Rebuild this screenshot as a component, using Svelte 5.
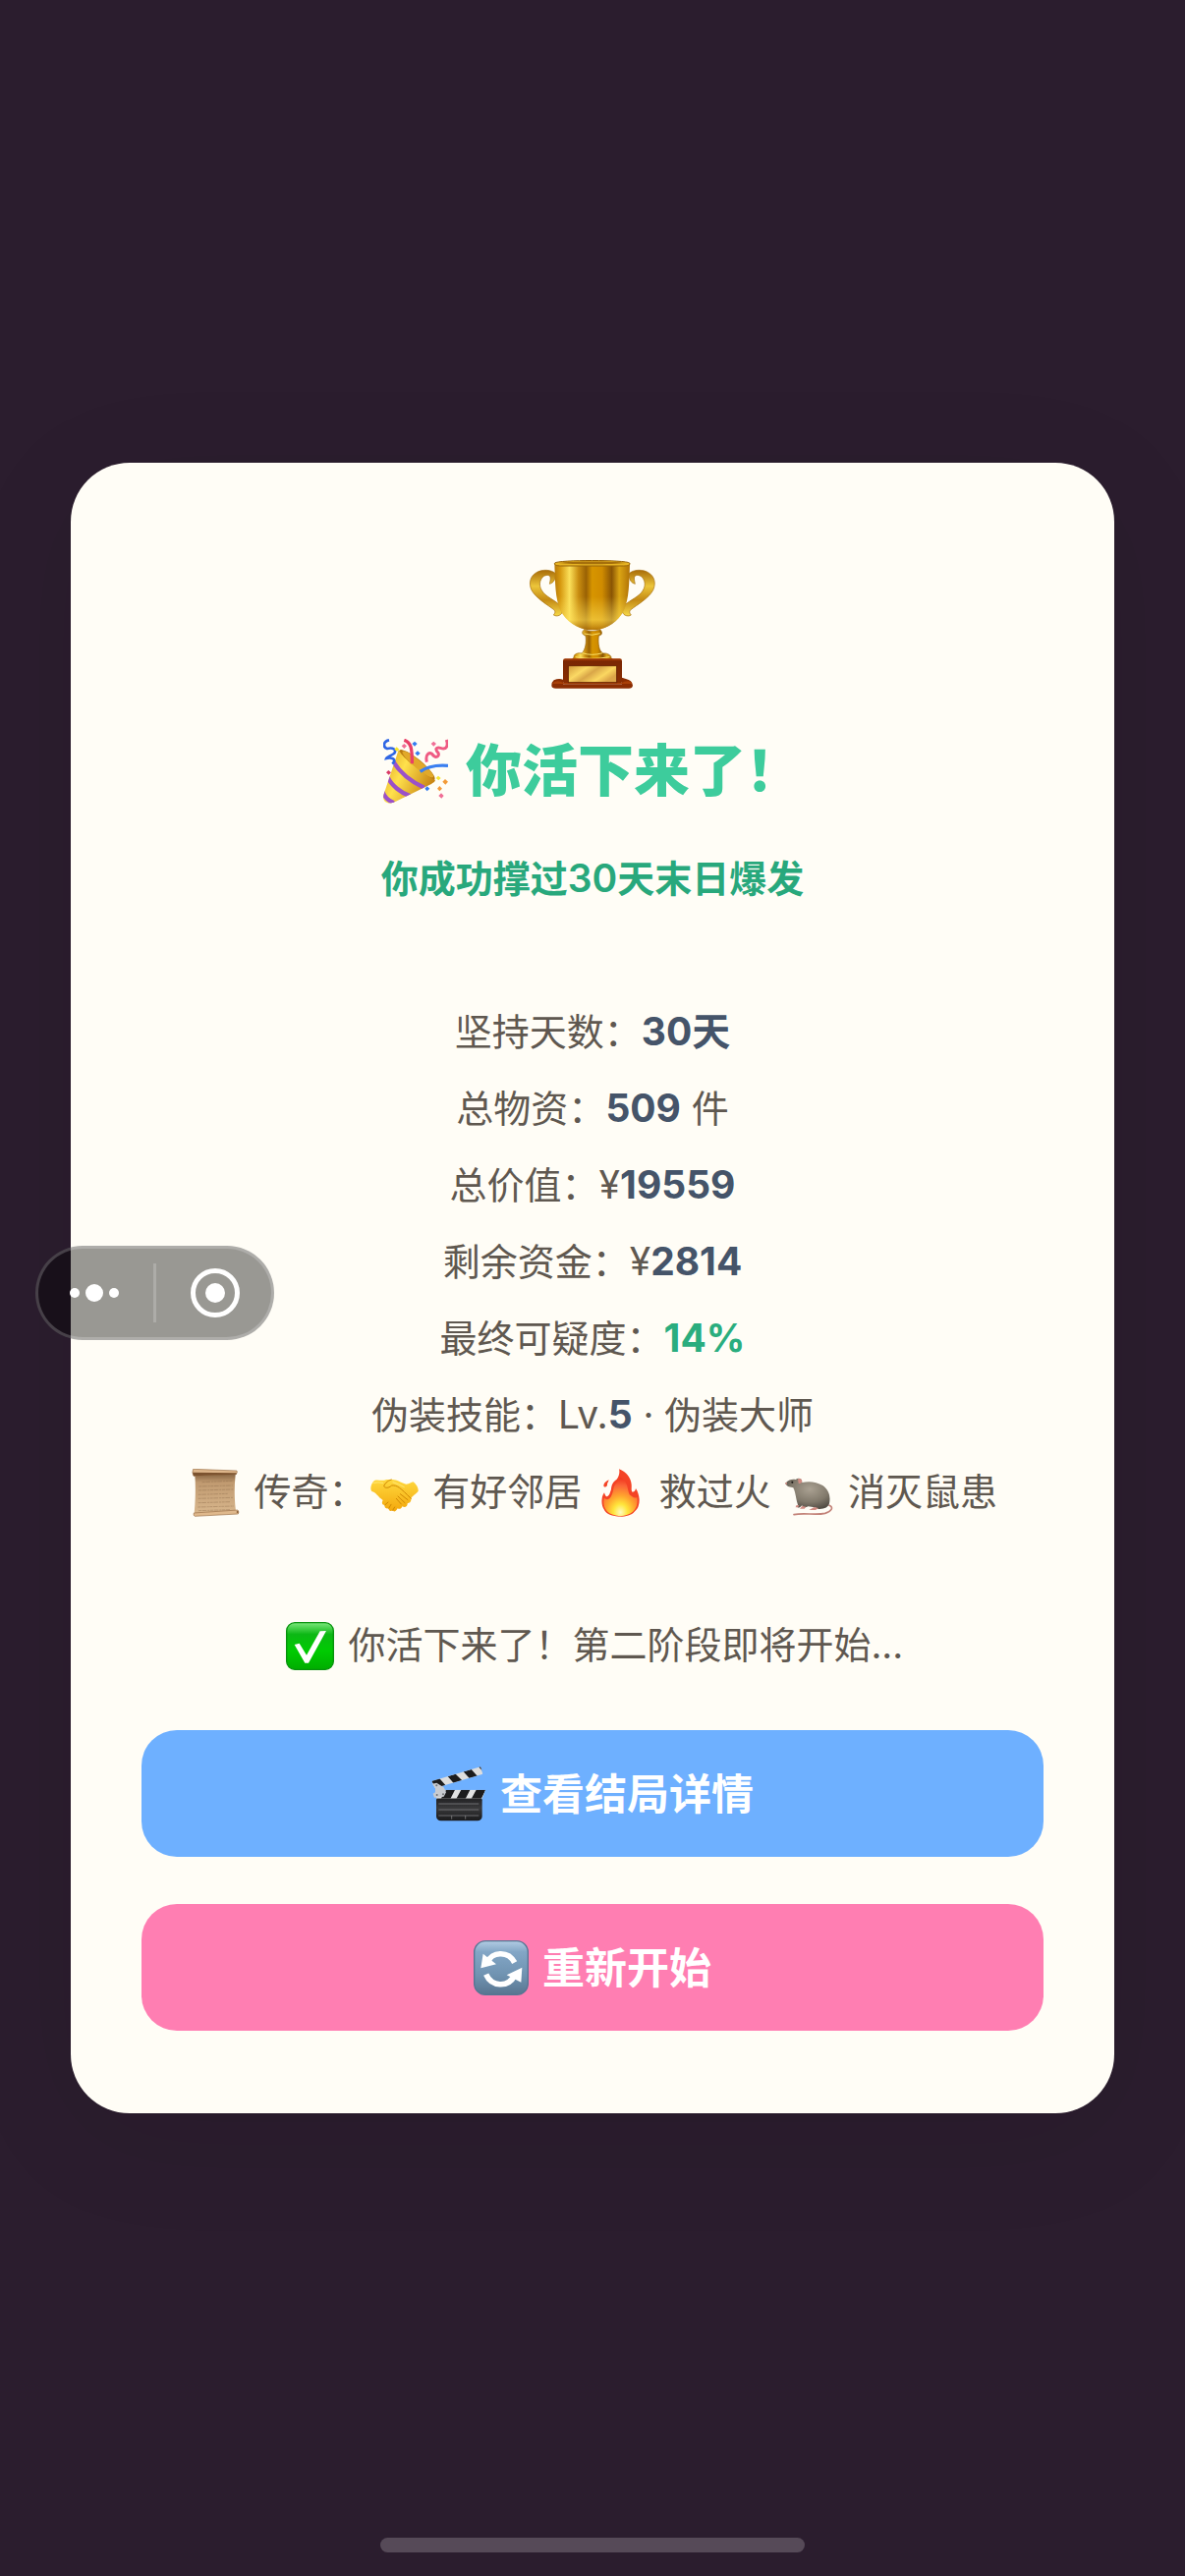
<script>
  const stats = [
    { label: '坚持天数：', value: '30天' },
    { label: '总物资：', value: '509', after: ' 件' },
    { label: '总价值：', prefix: '¥', value: '19559' },
    { label: '剩余资金：', prefix: '¥', value: '2814' },
    { label: '最终可疑度：', value: '14%', good: true },
    { label: '伪装技能：', prefix: 'Lv.', value: '5', after: ' · 伪装大师' }
  ];
</script>

<div class="page">
  <main class="card">
    <svg class="trophy" viewBox="108 87 396 396" aria-hidden="true">
      <defs>
        <linearGradient id="cup" x1="0" x2="1">
          <stop offset="0" stop-color="#b87a08" />
          <stop offset=".08" stop-color="#d79a10" />
          <stop offset=".2" stop-color="#fbe05a" />
          <stop offset=".32" stop-color="#c98d10" />
          <stop offset=".42" stop-color="#9a6204" />
          <stop offset=".5" stop-color="#d79500" />
          <stop offset=".63" stop-color="#d08c00" />
          <stop offset=".76" stop-color="#8a5504" />
          <stop offset=".86" stop-color="#dba514" />
          <stop offset="1" stop-color="#b07206" />
        </linearGradient>
        <linearGradient id="cupGlow" x1="0" x2="0" y1="0" y2="1">
          <stop offset=".5" stop-color="#ffe860" stop-opacity="0" />
          <stop offset=".85" stop-color="#ffe15a" stop-opacity=".55" />
          <stop offset="1" stop-color="#a86a08" stop-opacity=".7" />
        </linearGradient>
        <linearGradient id="handle" x1="0" x2="0" y1="0" y2="1">
          <stop offset="0" stop-color="#a86c08" />
          <stop offset=".35" stop-color="#ecc53a" />
          <stop offset=".65" stop-color="#c48a14" />
          <stop offset="1" stop-color="#f6d848" />
        </linearGradient>
        <linearGradient id="wood" x1="0" x2="0" y1="0" y2="1">
          <stop offset="0" stop-color="#a63c06" />
          <stop offset=".12" stop-color="#7a2703" />
          <stop offset="1" stop-color="#8a2d02" />
        </linearGradient>
        <linearGradient id="plate" x1="0" x2="1" y1="0" y2=".5">
          <stop offset="0" stop-color="#d39a3c" />
          <stop offset=".35" stop-color="#fbd964" />
          <stop offset=".55" stop-color="#d9a648" />
          <stop offset=".8" stop-color="#fbd760" />
          <stop offset="1" stop-color="#dca548" />
        </linearGradient>
      </defs>
      <path fill="url(#handle)" stroke="#a56c0c" stroke-width="2" d="M194 132C180 118 152 118 135 128C116 139 110 160 120 182C133 207 172 229 187 241C194 247 192 252 187 258C198 265 215 258 214 244C213 226 190 216 170 202C148 187 139 166 150 147C158 134 174 134 177 141C179 150 176 156 175 163C186 160 193 152 194 132Z" />
      <path fill="url(#handle)" stroke="#a56c0c" stroke-width="2" d="M417 132C431 118 459 118 476 128C495 139 501 160 491 182C478 207 439 229 424 241C417 247 419 252 424 258C413 265 396 258 397 244C398 226 421 216 441 202C463 187 472 166 461 147C453 134 437 134 434 141C432 150 435 156 436 163C425 160 418 152 417 132Z" />
      <path fill="url(#cup)" d="M190 100C192 160 192 208 208 243C225 278 262 300 291 303H320C350 300 385 278 402 243C418 208 418 160 420 100Z" />
      <path fill="url(#cupGlow)" d="M190 100C192 160 192 208 208 243C225 278 262 300 291 303H320C350 300 385 278 402 243C418 208 418 160 420 100Z" />
      <path fill="#e7b423" stroke="#97640a" stroke-width="3" d="M191 99C202 89 408 89 419 99C424 107 407 108 401 108H209C202 108 186 106 191 99Z" />
      <path fill="#a56f0b" d="M202 99C245 93 365 93 408 99C365 104 245 104 202 99Z" />
      <path fill="url(#cup)" stroke="#97640a" stroke-width="2" d="M281 302C295 308 316 308 329 302C337 310 337 319 325 321C322 345 326 370 339 375C352 373 365 383 363 389C368 392 367 397 360 399H249C243 396 245 390 249 388C248 376 262 373 273 375C285 364 288 340 285 321C273 318 272 309 281 302Z" />
      <path fill="none" stroke="#fbdf66" stroke-width="3" d="M281 315Q304 323 329 314M254 386Q304 396 358 386M275 374Q304 384 337 374" />
      <rect x="216" y="391" width="180" height="78" rx="7" fill="url(#wood)" />
      <path fill="#8b2d02" d="M216 455Q203 450 188 457Q180 464 181 474Q182 482 194 482H417Q428 482 429 473Q427 457 408 453L396 449V469H216Z" />
      <path fill="#a94008" d="M184 465Q200 455 217 465H395Q412 455 426 464V468H184Z" />
      <rect x="232" y="413" width="148" height="51" fill="url(#plate)" stroke="#6b2503" stroke-width="3" />
    </svg>

    <h1>
      <svg class="title-icon" viewBox="63 60 198 198" aria-hidden="true">
        <defs>
          <linearGradient id="cone" x1="0" x2="1" y1="0" y2=".5">
            <stop offset="0" stop-color="#d99a1c" />
            <stop offset=".45" stop-color="#ffe14c" />
            <stop offset="1" stop-color="#c98614" />
          </linearGradient>
          <clipPath id="coneClip"><path d="M110 94C118 112 165 155 221 186C224 190 216 194 210 198L100 252C80 262 60 255 64 232Z" /></clipPath>
        </defs>
        <ellipse cx="166" cy="140" rx="70" ry="17" transform="rotate(40 166 140)" fill="#b97a10" />
        <ellipse cx="169" cy="138" rx="61" ry="12" transform="rotate(40 169 138)" fill="#e1a92a" />
        <path fill="url(#cone)" d="M110 94C118 112 165 155 221 186C224 190 216 194 210 198L100 252C80 262 60 255 64 232Z" />
        <g clip-path="url(#coneClip)" fill="none" stroke="#9b51c9" stroke-width="13">
          <path d="M92 128C112 160 145 190 188 209" />
          <path d="M76 176C88 202 116 225 146 235" />
          <path d="M60 219C66 237 77 249 96 256" />
        </g>
        <path fill="none" stroke="#e94068" stroke-width="10" d="M127 64C146 70 152 84 151 136" />
        <path fill="none" stroke="#3b7ff0" stroke-width="10" d="M176 160C197 145 225 139 261 142" />
        <path fill="none" stroke="#2f66e4" stroke-width="8" d="M81 64C61 68 63 87 75 90C93 85 106 94 96 105C84 113 73 116 72 120C89 116 106 122 91 137" />
        <path fill="none" stroke="#ef5b83" stroke-width="9" d="M196 131C191 108 202 100 212 106C224 123 236 113 231 103C219 91 226 84 238 88C257 95 262 80 256 63" />
        <path fill="#f06f96" d="m127 75 8 7-8 8-8-8zM217 68l8 7-8 8-8-8zM240 226l8 8-7 8-9-8z" />
        <path fill="#357df1" d="m159 68 8 7-8 8-8-8zM168 97l8 7-8 8-8-8zM197 205l8 7-8 8-7-8z" />
        <path fill="#f5e632" d="m104 85 8 7-7 7-8-7zM231 173l8 7-7 7-8-7z" />
        <path fill="#f39b38" d="m252 183 9 8-8 9-9-9zM235 204l8 8-8 8-7-8z" />
        <path fill="#d93a66" d="m79 156 8 7-7 7-8-7z" />
      </svg>
      <span>你活下来了！</span>
    </h1>

    <p class="subtitle">你成功撑过<span class="num">30</span>天末日爆发</p>

    <ul class="stats">
      {#each stats as row}
        <li>{row.label}{#if row.prefix}<span class="num">{row.prefix}</span>{/if}<strong class:good={row.good}>{row.value}</strong>{row.after ?? ''}</li>
      {/each}
      <li>
        <svg class="emoji" viewBox="56 66 147 147" aria-hidden="true">
          <defs>
            <linearGradient id="paper" x1="0" x2="0" y1="0" y2="1">
              <stop offset="0" stop-color="#8c6946" />
              <stop offset=".2" stop-color="#c09a70" />
              <stop offset="1" stop-color="#d8b68c" />
            </linearGradient>
          </defs>
          <path fill="url(#paper)" d="M66 84H190Q184 140 191 196L64 202Q70 140 66 84Z" />
          <path fill="none" stroke="#8a6a49" stroke-opacity=".6" stroke-width="2" stroke-dasharray="9 2 14 3 6 2" d="M88 107l92-4M78 120l103-3M77 132l106-3M76 145l90-3M76 157l107-3M76 170l98-3M75 183l110-3M77 194l96-3" />
          <path fill="#deb68b" stroke="#9c7148" stroke-width="2" d="M61 67L194 72Q197 77 192 82L62 88Q56 76 61 67Z" />
          <path fill="#7c532f" d="M59 77L193 79V83L62 88Z" />
          <path fill="#dfb88c" stroke="#9c7148" stroke-width="2" d="M63 201L197 192Q202 198 198 204L66 211Q60 209 63 201Z" />
          <circle cx="196" cy="198" r="3" fill="#8a5f38" />
        </svg> 传奇：<svg class="emoji" viewBox="594 66 147 147" aria-hidden="true">
          <defs>
            <linearGradient id="hand" x1="0" x2="0" y1="0" y2="1">
              <stop offset="0" stop-color="#ffd83e" />
              <stop offset="1" stop-color="#f3a80c" />
            </linearGradient>
          </defs>
          <path fill="url(#hand)" d="M606 102C616 99 627 103 636 101C646 98 652 100 658 99C674 97 684 107 703 113C713 113 719 107 724 106C734 112 741 126 740 134C732 145 721 148 718 157C719 168 713 171 707 172C708 182 699 185 691 181C688 189 682 190 677 187C673 197 664 199 662 193C655 198 649 194 650 187C640 189 636 183 638 177C628 176 628 168 632 162C619 154 613 139 598 135C591 126 597 110 606 102Z" />
          <path fill="none" stroke="#cf8804" stroke-width="3" stroke-linecap="round" d="M658 99C644 103 637 113 635 120C642 128 654 122 659 117C676 116 684 123 718 157M685 143l23 18M678 150l21 20M673 157l15 17M650 187l7-12M638 177l10-9M662 193l6-10" />
          <path fill="none" stroke="#ffe775" stroke-width="3" stroke-linecap="round" d="M603 109Q617 106 632 109M663 107Q681 113 697 122" />
        </svg> 有好邻居 <svg class="emoji" viewBox="50 66 147 147" aria-hidden="true">
          <defs>
            <radialGradient id="fire" cx=".5" cy=".9" r=".85">
              <stop offset="0" stop-color="#fffbc0" />
              <stop offset=".25" stop-color="#ffe53b" />
              <stop offset=".5" stop-color="#ffa52e" />
              <stop offset=".8" stop-color="#fb6638" />
              <stop offset="1" stop-color="#f23b22" />
            </radialGradient>
          </defs>
          <path fill="#f44325" d="M119 67C142 76 156 95 157 114C158 126 155 132 160 137C167 137 169 131 170 126C181 142 183 164 179 176C178 186 170 193 166 197C158 207 140 212 122 212C99 211 79 205 73 190C64 177 64 152 74 139C77 149 80 152 84 150C91 146 91 139 95 129C96 114 101 105 112 98C119 90 122 77 119 67ZM88 100C86 108 82 110 83 117C77 125 71 122 72 116C74 107 80 105 88 100Z" />
          <path fill="url(#fire)" d="M122 91C120 105 105 110 102 127C99 145 93 159 83 160C78 160 75 154 73 157C68 183 79 207 122 211C160 209 180 187 174 153C166 158 157 150 151 145C143 126 148 106 122 91Z" />
        </svg> 救过火 <svg class="emoji" viewBox="618 66 147 147" aria-hidden="true">
          <defs>
            <radialGradient id="fur" cx=".55" cy=".35" r=".7">
              <stop offset="0" stop-color="#aaa192" />
              <stop offset=".6" stop-color="#81796b" />
              <stop offset="1" stop-color="#4d473f" />
            </radialGradient>
          </defs>
          <path fill="none" stroke="#c38278" stroke-width="5" stroke-linecap="round" d="M753 178C768 184 759 196 740 202C709 209 676 199 645 206" />
          <path fill="url(#fur)" d="M619 110C630 97 643 98 650 99C660 92 670 96 670 108C689 103 714 105 733 117C750 129 758 148 753 172C751 183 737 190 720 189L709 184L688 181C680 187 669 183 670 177C661 188 652 187 657 176C650 155 650 137 643 124C635 121 623 122 619 110Z" />
          <path fill="#d08b82" d="M657 97Q669 93 670 105Q666 114 659 110ZM619 108h5v5h-5zM652 178l9-1-3 7h-8zM670 180l12 2-5 6h-14zM707 183l13 3-9 6h-20z" />
          <circle cx="640" cy="107" r="3" fill="#171412" />
        </svg> 消灭鼠患
      </li>
    </ul>

    <p class="notice">
      <svg class="emoji" viewBox="0 0 147 147" aria-hidden="true">
        <defs>
          <linearGradient id="tick" x1="0" x2="0" y1="0" y2="1">
            <stop offset="0" stop-color="#7be77b" />
            <stop offset=".25" stop-color="#0cb814" />
            <stop offset=".6" stop-color="#00cb02" />
            <stop offset="1" stop-color="#00ad00" />
          </linearGradient>
        </defs>
        <rect x="2" y="2" width="143" height="143" rx="25" fill="url(#tick)" stroke="#07920d" stroke-width="4" />
        <path fill="#fff" d="M26 69L41 65L63 101L104 28L123 27L69 125H58Z" />
      </svg> 你活下来了！第二阶段即将开始...
    </p>

    <div class="actions">
      <button class="action details" type="button">
        <svg viewBox="59 56 168 168" aria-hidden="true">
          <defs>
            <linearGradient id="slate" x1="0" x2="0" y1="0" y2="1">
              <stop offset="0" stop-color="#1c1c1e" />
              <stop offset=".5" stop-color="#39393b" />
              <stop offset="1" stop-color="#19191b" />
            </linearGradient>
            <clipPath id="armTop"><path d="M60 101L209 57L216 79L70 122Z" /></clipPath>
            <clipPath id="armLow"><path d="M74 127H224L214 154H74Z" /></clipPath>
          </defs>
          <rect x="74" y="145" width="140" height="77" rx="14" fill="url(#slate)" />
          <g clip-path="url(#armTop)">
            <path fill="#dedede" d="M55 50H220V130H55Z" />
            <path fill="#1c1c1d" d="M58 100L84 93L104 115L76 124ZM109 86L133 79L153 99L127 107ZM157 72L181 65L200 86L175 92ZM203 57L224 52V80Z" />
          </g>
          <g clip-path="url(#armLow)">
            <path fill="#e2e2e2" d="M70 125H226V155H70Z" />
            <path fill="#1c1c1d" d="M105 126H132L117 155H88ZM151 126H178L163 155H135ZM197 126H226L211 155H181Z" />
          </g>
          <path fill="#c8cbd0" d="M62 109L75 106L97 120L104 135L97 148L68 151L64 139L71 135V121Z" />
          <circle cx="75" cy="114" r="3" fill="#717478" /><circle cx="76" cy="143" r="3" fill="#717478" /><circle cx="95" cy="141" r="3" fill="#717478" />
          <path fill="none" stroke="#8f8f91" stroke-width="2" d="M81 170H204M81 188H204M81 206H204M121 206V217M163 206V217" />
        </svg>
        <span>查看结局详情</span>
      </button>
      <button class="action restart" type="button">
        <svg viewBox="69 75 168 168" aria-hidden="true">
          <defs>
            <linearGradient id="reload" x1="0" x2="0" y1="0" y2="1">
              <stop offset="0" stop-color="#b3cce3" />
              <stop offset=".2" stop-color="#83a6c6" />
              <stop offset=".65" stop-color="#6f92b0" />
              <stop offset="1" stop-color="#587590" />
            </linearGradient>
          </defs>
          <rect x="71" y="77" width="164" height="164" rx="34" fill="url(#reload)" stroke="#567694" stroke-width="4" />
          <path fill="none" stroke="#fff" stroke-width="17" d="M112 142C123 111 174 104 194 143M107 179C124 217 174 221 195 181" />
          <path fill="#fff" d="M98 116L91 160L138 148ZM217 158L170 181L214 203Z" />
        </svg>
        <span>重新开始</span>
      </button>
    </div>
  </main>

  <div class="capsule">
    <button type="button" aria-label="更多">
      <svg viewBox="0 0 50 18" width="50" height="18" fill="#fff">
        <circle cx="5" cy="9" r="5" /><circle cx="25" cy="9" r="9" /><circle cx="45" cy="9" r="5" />
      </svg>
    </button>
    <span class="divider"></span>
    <button type="button" aria-label="关闭">
      <svg viewBox="0 0 50 50" width="50" height="50">
        <circle cx="25" cy="25" r="22.5" fill="none" stroke="#fff" stroke-width="5" />
        <circle cx="25" cy="25" r="10" fill="#fff" />
      </svg>
    </button>
  </div>
  <div class="home-indicator"></div>
</div>

<style>
  :global(body) {
    background: #2b1d2e;
  }

  .page {
    position: relative;
    box-sizing: border-box;
    min-height: 100vh;
    padding: 72px;
    display: flex;
    align-items: center;
    background: #2b1d2e;
    color: #5f5850;
    font-family: Inter, 'Noto Sans CJK SC', sans-serif;
    font-size: 38px;
    line-height: 78px;
    overflow: hidden;
  }

  .card {
    flex: 1;
    box-sizing: border-box;
    display: flex;
    flex-direction: column;
    padding: 98px 72px 84px;
    border-radius: 60px;
    background: #fffdf6;
    box-shadow: 0 24px 120px rgba(0, 0, 0, 0.08);
    text-align: center;
  }

  .trophy {
    width: 132px;
    height: 132px;
    align-self: center;
  }

  h1 {
    display: flex;
    align-items: center;
    justify-content: center;
    gap: 18px;
    margin: 42px 0 28px;
    color: #3dcc9c;
    font-size: 57px;
    font-weight: 800;
    line-height: 84px;
  }

  .title-icon {
    width: 66px;
    height: 66px;
  }

  p,
  ul {
    margin: 0;
    padding: 0;
    list-style: none;
  }

  .subtitle {
    color: #28a87c;
    font-weight: 600;
  }

  .stats {
    margin: 78px 0;
  }

  li,
  .notice,
  .subtitle {
    min-height: 78px;
  }

  strong {
    color: #455469;
    font-weight: 700;
  }

  strong,
  .num {
    font-size: 39px;
    line-height: 1;
  }

  strong.good {
    color: #2aad7e;
  }

  .emoji {
    width: 49px;
    height: 49px;
    margin: 0 4px;
    vertical-align: -12px;
  }

  .actions {
    display: flex;
    flex-direction: column;
    gap: 48px;
    margin-top: 48px;
  }

  .action {
    display: flex;
    align-items: center;
    justify-content: center;
    gap: 14px;
    min-height: 129px;
    padding: 0;
    border: 0;
    border-radius: 36px;
    color: #fff;
    font: inherit;
    font-size: 43px;
    font-weight: 600;
  }

  .action svg {
    width: 56px;
    height: 56px;
  }

  .details {
    background: #6eb0ff;
  }

  .restart {
    background: #ff7eb2;
  }

  .capsule {
    position: absolute;
    top: 1268px;
    left: 36px;
    box-sizing: border-box;
    width: 243px;
    height: 96px;
    display: flex;
    align-items: center;
    border: 3px solid rgba(255, 255, 255, 0.2);
    border-radius: 48px;
    background: rgba(0, 0, 0, 0.4);
  }

  .capsule button {
    flex: 1;
    display: flex;
    align-items: center;
    justify-content: center;
    height: 90px;
    padding: 0;
    border: 0;
    background: none;
  }

  .capsule button:first-child {
    padding-right: 3px;
  }

  .capsule button:last-child {
    padding-left: 3px;
  }

  .divider {
    width: 3px;
    height: 60px;
    background: rgba(255, 255, 255, 0.2);
  }

  .home-indicator {
    position: absolute;
    bottom: 24px;
    left: 50%;
    width: 432px;
    height: 15px;
    margin-left: -216px;
    border-radius: 8px;
    background: #564a58;
  }
</style>
